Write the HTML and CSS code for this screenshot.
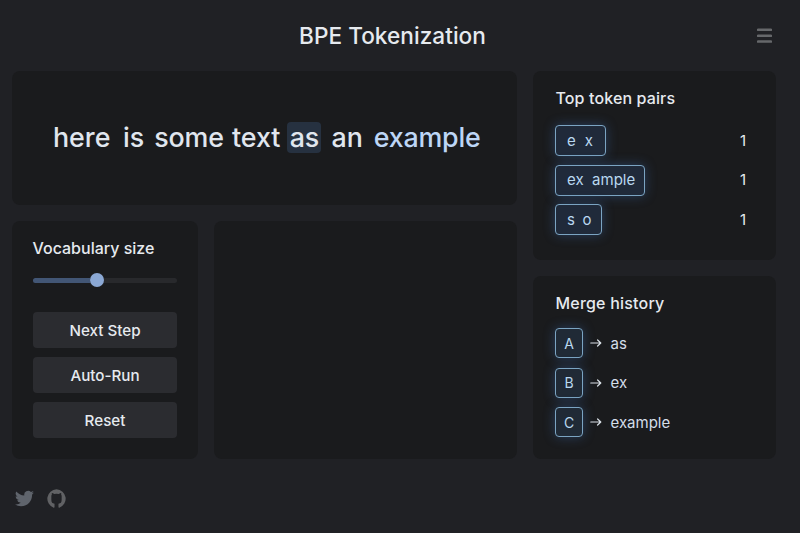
FILE: index.html
```html
<!DOCTYPE html>
<html lang="en">
<head>
<meta charset="utf-8">
<title>BPE Tokenization</title>
<link rel="stylesheet" href="styles.css">
</head>
<body>
<header class="header">
  <h1 class="title">BPE Tokenization</h1>
  <button class="menu" aria-label="Menu"><svg viewBox="0 0 15 16"><path d="M1 1.8H14M1 7.8H14M1 13.6H14"/></svg></button>
</header>
<main class="layout">
  <div class="left">
    <section class="panel sentence">
      <span class="w w-here">here</span><span class="w w-is">is</span><span class="w w-some">some</span><span class="w w-text">text</span><span class="w w-as">as</span><span class="w w-an">an</span><span class="w w-example">example</span>
    </section>
    <div class="lower">
      <section class="panel controls">
        <h2 class="heading">Vocabulary size</h2>
        <div class="slider"><div class="fill"></div><div class="thumb"></div></div>
        <div class="buttons">
          <button class="btn">Next Step</button>
          <button class="btn">Auto-Run</button>
          <button class="btn">Reset</button>
        </div>
      </section>
      <section class="panel canvas"></section>
    </div>
  </div>
  <div class="right">
    <section class="panel side pairs">
      <h2 class="heading">Top token pairs</h2>
      <div class="row"><span class="chip chip-ex"><b>e</b><b>x</b></span><span class="count">1</span></div>
      <div class="row"><span class="chip chip-ample"><b>ex</b><b>ample</b></span><span class="count">1</span></div>
      <div class="row"><span class="chip chip-so"><b>s</b><b>o</b></span><span class="count">1</span></div>
    </section>
    <section class="panel side history">
      <h2 class="heading">Merge history</h2>
      <div class="row"><span class="key">A</span><svg class="arrow" viewBox="0 0 12 10"><path d="M.8 5H10.8M7.6 2L10.8 5L7.6 8"/></svg><span class="merged">as</span></div>
      <div class="row"><span class="key">B</span><svg class="arrow" viewBox="0 0 12 10"><path d="M.8 5H10.8M7.6 2L10.8 5L7.6 8"/></svg><span class="merged">ex</span></div>
      <div class="row"><span class="key">C</span><svg class="arrow" viewBox="0 0 12 10"><path d="M.8 5H10.8M7.6 2L10.8 5L7.6 8"/></svg><span class="merged">example</span></div>
    </section>
  </div>
</main>
<footer class="footer">
  <svg class="twitter" viewBox="0 0 24 24"><path d="M23.95 4.57a10 10 0 0 1-2.82.77 4.96 4.96 0 0 0 2.16-2.72c-.95.55-2 .95-3.13 1.18a4.92 4.92 0 0 0-8.38 4.48C7.69 8.1 4.07 6.13 1.64 3.16a4.93 4.93 0 0 0 1.52 6.57 4.9 4.9 0 0 1-2.23-.61v.06a4.92 4.92 0 0 0 3.95 4.83 5 5 0 0 1-2.21.08 4.94 4.94 0 0 0 4.6 3.42A9.87 9.87 0 0 1 0 19.54a13.99 13.99 0 0 0 7.55 2.21c9.05 0 14-7.5 14-13.98 0-.21 0-.42-.02-.63a9.94 9.94 0 0 0 2.42-2.57z"/></svg>
  <svg class="github" viewBox="0 0 24 24"><path d="M12 .3a12 12 0 0 0-3.6 23.3c.9.1 1.1-.3 1.1-.8v-4.3c-2.8-.3-4-1.6-4-5V9.200c0-.8.2-1.500.7-2.100-.2-.5-.3-1.200 0-2 .9 0 1.900.5 2.800 1.200a12 12 0 0 1 6 0c.9-.7 1.900-1.200 2.800-1.200.3.800.2 1.500 0 2 .5.6.7 1.300.7 2.100v4.300c0 3.400-1.200 4.700-4 5v4.300c0 .5.2.9 1.100.8A12 12 0 0 0 12 .3"/></svg>
</footer>
</body>
</html>
```
FILE: styles.css
```css
* { box-sizing: border-box; }
body {
  margin: 0;
  height: 533px;
  overflow: hidden;
  background: #202125;
  color: #e6eaef;
  font-family: Inter, "Liberation Sans", sans-serif;
}
h1, h2 { margin: 0; font-weight: 500; }
button { border: 0; padding: 0; font: inherit; color: inherit; }
.header {
  height: 71px;
  display: grid;
  grid-template-columns: 1fr auto 1fr;
  align-items: center;
  padding: 0 28px 0 13px;
}
.title { grid-column: 2; font-size: 22.6px; line-height: 30px; letter-spacing: .03px; }
.menu { justify-self: end; width: 15px; height: 16px; background: none; }
.menu svg { display: block; width: 15px; height: 16px; fill: none; stroke: #66686b; stroke-width: 2.5; stroke-linecap: round; }
.layout { display: flex; gap: 16px; padding: 0 24px 0 12px; height: 388px; }
.left { width: 505px; display: flex; flex-direction: column; gap: 16px; }
.right { width: 243px; display: flex; flex-direction: column; gap: 16px; }
.panel { background: #1a1b1d; border-radius: 8px; }
.sentence {
  height: 134px;
  display: flex;
  align-items: center;
  padding: 0 0 1px 41px;
  font-size: 26.8px;
  font-weight: 450;
  color: #e0e6ee;
}
.w { line-height: 31px; white-space: nowrap; }
.w-is { margin-left: 12.5px; }
.w-some { margin-left: 10px; letter-spacing: -.1px; }
.w-text { margin-left: 8px; }
.w-as { margin-left: 7px; width: 34px; text-align: center; background: #263140; border-radius: 4px; }
.w-an { margin-left: 10px; }
.w-example { margin-left: 11px; letter-spacing: -.2px; color: #bdd6f6; }
.lower { flex: 1; display: flex; gap: 16px; }
.controls { width: 186px; padding: 17px 21px 21px; display: flex; flex-direction: column; }
.canvas { flex: 1; }
.heading { font-size: 16px; line-height: 20px; }
.controls .heading { margin-left: -.5px; }
.side .heading { letter-spacing: .12px; margin-left: .5px; }
.history .heading { letter-spacing: .2px; }
.slider {
  margin-top: 19.5px;
  height: 5px;
  border-radius: 3px;
  background: #28292c;
  display: flex;
  align-items: center;
}
.fill { width: 57px; height: 5px; border-radius: 3px 0 0 3px; background: #425675; }
.thumb { width: 14px; height: 14px; margin-left: -.5px; border-radius: 50%; background: #8ba8d4; }
.buttons { margin-top: auto; display: grid; gap: 9px; }
.btn { height: 36px; border-radius: 4px; background: #2b2c30; font-size: 15.2px; font-weight: 500; }
.side { padding: 17px 30px 0 22px; }
.pairs { height: 188.5px; }
.history { flex: 1; }
.row { display: flex; align-items: center; height: 31px; margin-bottom: 8.5px; }
.heading + .row { margin-top: 17px; }
.history .heading + .row { margin-top: 15px; }
.chip, .key {
  display: flex;
  align-items: center;
  height: 31px;
  border: 1px solid #7ba4c2;
  border-radius: 4px;
  background: #202a3a;
  box-shadow: 0 0 12px rgba(62, 112, 183, .42);
  color: #b9d8f0;
  font-size: 15px;
}
.chip { padding: 0 0 1px 11px; gap: 9px; }
.chip b { font-weight: 400; }
.chip-ex { width: 51px; }
.chip-ample { width: 90px; gap: 8.5px; }
.chip-so { width: 46.5px; gap: 7.5px; }
.count { margin-left: auto; padding-bottom: 1px; font-size: 15px; }
.key { width: 28px; justify-content: center; background: #202a36; font-size: 14px; }
.history .key { height: 30px; }
.arrow { width: 12px; height: 10px; margin-left: 7px; fill: none; stroke: #d9e0e7; stroke-width: 1.2; stroke-linecap: round; stroke-linejoin: round; }
.merged { margin-left: 8.5px; font-size: 15px; color: #d4dee9; }
.footer { display: flex; align-items: center; gap: 13px; padding: 30px 0 0 15px; }
.footer svg { width: 19px; height: 19px; fill: #5f646c; }
.footer .github { fill: #606164; }
```
